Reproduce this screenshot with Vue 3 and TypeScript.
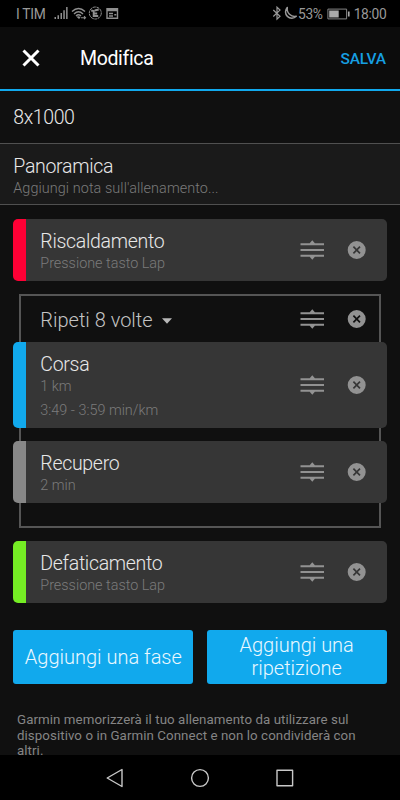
<script setup lang="ts">
import { defineComponent, h } from 'vue'

interface Step {
  title: string
  details: string[]
  tone: string
}

const warmup: Step = { title: 'Riscaldamento', details: ['Pressione tasto Lap'], tone: 'red' }
const repeated: Step[] = [
  { title: 'Corsa', details: ['1 km', '3:49 - 3:59 min/km'], tone: 'blue' },
  { title: 'Recupero', details: ['2 min'], tone: 'grey' },
]
const cooldown: Step = { title: 'Defaticamento', details: ['Pressione tasto Lap'], tone: 'green' }

// Drag handle and remove glyphs shared by every row
const RowActions = defineComponent({
  setup: () => () =>
    h('svg', { width: 66, height: 20, viewBox: '0 0 66 20', 'aria-hidden': 'true' }, [
      h('path', {
        fill: '#929292',
        d: 'M.5 3.2h9.2L12.3.3l2.6 2.900H24v2H.5zM.5 9H24v2H.5zM.5 14.800H24v2h-9.100l-2.600 2.900-2.600-2.900H.5z',
      }),
      h('path', {
        fill: '#929292',
        'fill-rule': 'evenodd',
        d: 'M56.700 1a9 9 0 1 1 0 18 9 9 0 0 1 0-18zm-2.700 5.100-1.200 1.200 2.700 2.700-2.700 2.700 1.200 1.200 2.700-2.700 2.700 2.700 1.200-1.200-2.700-2.700 2.700-2.700-1.200-1.200-2.700 2.700z',
      }),
    ]),
})

const StepCard = defineComponent({
  props: { step: { type: Object, required: true } },
  setup: (props) => () => {
    const step = props.step as Step
    return h('article', { class: ['card', step.tone] }, [
      h('div', { class: 'card-text' }, [
        h('h2', step.title),
        ...step.details.map((line) => h('p', line)),
      ]),
      h(RowActions),
    ])
  },
})
</script>

<template>
  <div class="screen">
    <div class="status">
      <span class="carrier">I TIM</span>
      <svg class="left-icons" width="66" height="15" viewBox="0 0 66 15">
        <g fill="#8f8f8f">
          <path d="M.5 11h1.500v2H.5zM3.500 9.300H5V13H3.500zM6.500 7H8v6H6.500zM9.300 4.300h1.500V13H9.300zM12.100 1h1.500v12h-1.500z" />
          <path d="M22.500 10.800 25 13l1.500-1.500q-1.500-2-4-.7z" />
        </g>
        <g fill="none" stroke="#8f8f8f" stroke-width="1.400">
          <path d="M18 5.500Q24.500-.5 31 5.500M20 7.900Q24.500 3.500 29 7.900M22 9.900Q24.500 7.600 27 9.900" />
          <path d="M27 11.700h4.500M30 10.200l1.500 1.500-1.500 1.500" stroke-width="1.100" />
          <circle cx="41.300" cy="7" r="6" stroke-width="1" stroke-dasharray="3 .6" />
          <path d="M37.200 4.500 39.700 5v5h4.500M39.700 7.500h3.500M40.700 4.500l4-1" stroke-width="1.900" />
          <path d="M53 2.700h10.500v9.600H53z" />
          <path d="M53 4h10.500" stroke-width="2.500" />
          <path d="M55 7.500h4M55 10h4M60.300 8.700h2" />
        </g>
      </svg>
      <span class="spacer"></span>
      <svg class="right-icons" width="27" height="15" viewBox="0 0 27 15">
        <path d="M2.300 4 9 10.300l-3 2.900V1.200l3 2.900-6.700 6.400" fill="none" stroke="#999" stroke-width="1.200" />
        <path d="M16.300 1.500A6 6 0 1 0 25.300 10.300 7.600 7.600 0 0 1 16.300 1.500z" fill="none" stroke="#999" stroke-width="1.500" stroke-linejoin="round" />
      </svg>
      <span class="percent">53%</span>
      <svg class="battery" width="24" height="12" viewBox="0 0 24 12">
        <path d="M.9 1.100h18.700v9.800H.9z" fill="none" stroke="#858585" stroke-width="1" />
        <path d="M2.200 2.400h9.500v7.200H2.200zM20.900 3.500h1.700v5h-1.700z" fill="#aaa" />
      </svg>
      <span class="clock">18:00</span>
    </div>

    <header>
      <svg width="18" height="18" viewBox="0 0 18 18">
        <path d="m1.500 1.500 15 15M16.500 1.500l-15 15" stroke="#fff" stroke-width="3" />
      </svg>
      <h1>Modifica</h1>
      <button class="save">SALVA</button>
    </header>

    <main>
      <div class="name"><span>8x1000</span></div>
      <section class="overview">
        <h2>Panoramica</h2>
        <p>Aggiungi nota sull'allenamento...</p>
      </section>

      <div class="steps">
        <StepCard :step="warmup" />
        <section class="repeat">
          <div class="repeat-head">
            <span>Ripeti 8 volte</span>
            <svg class="caret" width="10" height="6" viewBox="0 0 10 6"><path d="M0 .3h10L5 5.700z" fill="#b8b8b8" /></svg>
            <RowActions />
          </div>
          <StepCard v-for="step in repeated" :key="step.title" :step="step" />
        </section>
        <StepCard :step="cooldown" />
      </div>

      <div class="buttons">
        <button>Aggiungi una fase</button>
        <button>Aggiungi una<br />ripetizione</button>
      </div>

      <p class="notice">
        Garmin memorizzerà il tuo allenamento da utilizzare sul<br />
        dispositivo o in Garmin Connect e non lo condividerà con<br />
        altri.
      </p>
    </main>

    <nav>
      <svg width="20" height="22" viewBox="0 0 20 22"><path d="M17 2.500v17L2.200 11z" /></svg>
      <svg width="20" height="22" viewBox="0 0 20 22"><circle cx="10" cy="11" r="8.400" /></svg>
      <svg width="20" height="22" viewBox="0 0 20 22"><path d="M2 3.200h15.600v15.600H2z" /></svg>
    </nav>
  </div>
</template>

<style>
body {
  margin: 0;
  background: #000;
}
</style>

<style scoped>
.screen {
  display: flex;
  flex-direction: column;
  width: 400px;
  height: 800px;
  overflow: hidden;
  background: #101010;
  color: #e8e8e8;
  font-family: Roboto, sans-serif;
  font-weight: 300;
}
.screen :deep(h1),
.screen :deep(h2),
.screen :deep(p) {
  margin: 0;
  font-weight: 300;
}
.screen :deep(svg) {
  display: block;
  flex: none;
}
button {
  border: 0;
  padding: 0;
  background: none;
  font: inherit;
}
.status {
  display: flex;
  flex: none;
  align-items: center;
  height: 27px;
  padding: 0 13.500px 0 16px;
  background: #000;
  color: #999;
  font-size: 13.800px;
  font-weight: 400;
  letter-spacing: -0.3px;
  white-space: nowrap;
}
.left-icons {
  margin-left: 9px;
}
.spacer {
  flex: 1;
}
.percent {
  margin: 0 4px 0 0;
}
.clock {
  margin-left: 3px;
}
header {
  display: flex;
  flex: none;
  align-items: center;
  box-sizing: border-box;
  height: 64px;
  padding: 0 14px 0 22px;
  border-bottom: 2px solid #11a9ed;
  background: #0c0c0c;
}
.screen header h1 {
  flex: 1;
  margin-left: 40px;
  padding-top: 1px;
  color: #fff;
  font-size: 19.500px;
  font-weight: 400;
  letter-spacing: -0.350px;
}
.save {
  padding-top: 1px;
  color: #169fe2;
  font-size: 15.500px;
  font-weight: 500;
  letter-spacing: -0.150px;
}
main {
  flex: none;
  height: 664px;
  overflow: hidden;
}
.name {
  display: flex;
  align-items: center;
  box-sizing: border-box;
  height: 53px;
  padding: 1px 0 0 13.300px;
  border-bottom: 1px solid #505050;
  font-size: 19.500px;
  letter-spacing: -0.400px;
}
.overview {
  box-sizing: border-box;
  height: 61px;
  padding: 11.500px 13.300px 0;
  border-bottom: 1px solid #505050;
  background: #1a1a1a;
}
.screen :deep(h2) {
  font-size: 19.500px;
  line-height: 22px;
  letter-spacing: -0.300px;
}
.screen :deep(p) {
  color: #7b7b7b;
  font-size: 14.400px;
  line-height: 22px;
}
.screen .overview p {
  letter-spacing: 0.080px;
}
.steps {
  display: flex;
  flex-direction: column;
  gap: 13.500px;
  padding: 13.500px 13.300px 0;
}
.screen :deep(.card) {
  display: flex;
  align-items: center;
  justify-content: space-between;
  box-sizing: border-box;
  min-height: 62px;
  padding: 0 21px 0 14px;
  border-left: 13.500px solid;
  border-radius: 5px;
  background: #363636;
}
.screen :deep(.card-text) {
  padding: 12px 0 6px;
}
.screen :deep(.card-text p + p) {
  margin-top: 1.700px;
}
.screen :deep(.red) {
  border-left-color: #ff0035;
}
.screen :deep(.blue) {
  border-left-color: #11a9ed;
}
.screen :deep(.grey) {
  border-left-color: #888;
}
.screen :deep(.green) {
  border-left-color: #75ed24;
}
.repeat {
  display: flex;
  flex-direction: column;
  gap: 13.500px;
  box-sizing: border-box;
  height: 233.500px;
  margin: 0 5.700px;
  border: 2px solid #555;
}
.repeat :deep(.card) {
  margin: 0 -7.700px;
}
.repeat-head {
  display: flex;
  align-items: center;
  height: 46px;
  margin-bottom: -13.500px;
  padding: 0 13.300px 0 19.300px;
  color: #c4c4c4;
  font-size: 20px;
}
.repeat-head span {
  padding-top: 1px;
}
.repeat-head .caret {
  margin: 4px auto 0 9px;
}
.buttons {
  display: grid;
  grid-template-columns: 1fr 1fr;
  gap: 13.300px;
  padding: 26.500px 13.300px 0;
}
.buttons button {
  height: 54px;
  padding-top: 1px;
  border-radius: 3px;
  background: #11a9ed;
  color: #eaf8ff;
  font-size: 20px;
  line-height: 23px;
}
.screen .notice {
  padding: 28.500px 0 0 17px;
  color: #858585;
  font-size: 13.300px;
  font-weight: 400;
  line-height: 15.700px;
  letter-spacing: 0.070px;
  white-space: nowrap;
}
nav {
  display: flex;
  flex: 1;
  align-items: center;
  justify-content: center;
  gap: 65px;
  background: #000;
}
nav svg {
  fill: none;
  stroke: #c8c8c8;
  stroke-width: 1.400;
  stroke-linejoin: round;
}
</style>
